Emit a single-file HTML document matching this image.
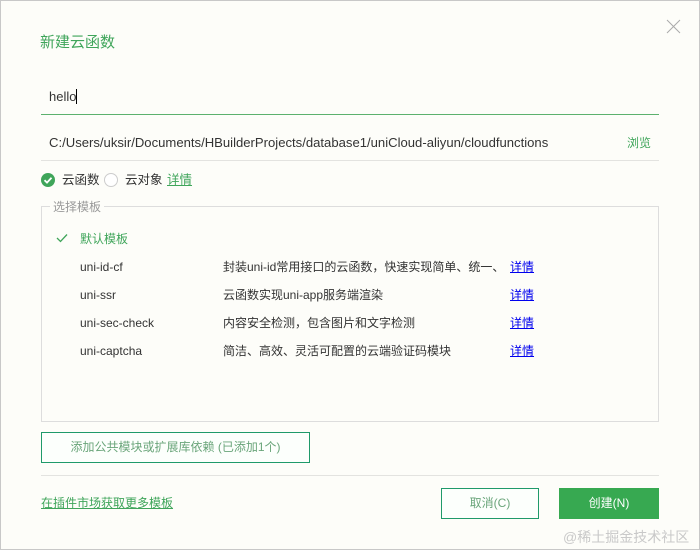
<!DOCTYPE html>
<html><head><meta charset="utf-8"><style>
*{margin:0;padding:0;box-sizing:border-box}
body{width:700px;height:550px;background:#fdfdf9;font-family:"Liberation Sans","Noto Sans CJK SC",sans-serif;font-size:12px;color:#333;position:relative;overflow:hidden}
.frame{position:absolute;left:0;top:0;width:700px;height:550px;border:1px solid #c8c8c8}
.a{position:absolute;white-space:nowrap;line-height:16px}
.g{color:#3fa55a}
.lnk{color:#00e;text-decoration:underline}
.hr{position:absolute;height:1px;background:#e3e3e0}
</style></head><body>
<div class="frame"></div>
<div class="a g" style="left:40px;top:34px;font-size:15px;line-height:18px">新建云函数</div>
<svg class="a" style="left:666px;top:19px" width="15" height="15"><path d="M1 1L14 14M14 1L1 14" stroke="#aaa" stroke-width="1"/></svg>
<div class="a" style="left:49px;top:89px;font-size:13px">hello<span style="display:inline-block;width:1px;height:15px;background:#000;vertical-align:-3px"></span></div>
<div style="position:absolute;left:41px;top:114px;width:618px;height:1px;background:#5cb16e"></div>
<div class="a" style="left:49px;top:135px;font-size:13.1px">C:/Users/uksir/Documents/HBuilderProjects/database1/uniCloud-aliyun/cloudfunctions</div>
<div class="a g" style="left:627px;top:135px">浏览</div>
<div class="hr" style="left:41px;top:160px;width:618px"></div>
<svg class="a" style="left:41px;top:173px" width="14" height="14"><circle cx="7" cy="7" r="7" fill="#3fa55a"/><path d="M3.5 7.2L6 9.6L10.5 4.8" stroke="#fff" stroke-width="1.8" fill="none"/></svg>
<div class="a" style="left:62px;top:172px;font-size:12.5px">云函数</div>
<svg class="a" style="left:104px;top:173px" width="14" height="14"><circle cx="7" cy="7" r="6.5" fill="#fff" stroke="#ccc"/></svg>
<div class="a" style="left:125px;top:172px;font-size:12.5px">云对象</div>
<div class="a g" style="left:167px;top:172px;text-decoration:underline;font-size:12.5px">详情</div>
<div style="position:absolute;left:41px;top:206px;width:618px;height:216px;border:1px solid #ddd"></div>
<div class="a" style="left:50px;top:199px;background:#fdfdf9;padding:0 3px;color:#999">选择模板</div>
<svg class="a" style="left:56px;top:233px" width="12" height="10"><path d="M1 5L4.5 8.5L11 1.5" stroke="#3fa55a" stroke-width="1.3" fill="none"/></svg>
<div class="a g" style="left:80px;top:231px">默认模板</div>
<div class="a" style="left:80px;top:259px">uni-id-cf</div><div class="a" style="left:223px;top:259px">封装uni-id常用接口的云函数，快速实现简单、统一、</div><div class="a lnk" style="left:510px;top:259px">详情</div>
<div class="a" style="left:80px;top:287px">uni-ssr</div><div class="a" style="left:223px;top:287px">云函数实现uni-app服务端渲染</div><div class="a lnk" style="left:510px;top:287px">详情</div>
<div class="a" style="left:80px;top:315px">uni-sec-check</div><div class="a" style="left:223px;top:315px">内容安全检测，包含图片和文字检测</div><div class="a lnk" style="left:510px;top:315px">详情</div>
<div class="a" style="left:80px;top:343px">uni-captcha</div><div class="a" style="left:223px;top:343px">简洁、高效、灵活可配置的云端验证码模块</div><div class="a lnk" style="left:510px;top:343px">详情</div>
<div style="position:absolute;left:41px;top:432px;width:269px;height:31px;border:1px solid #1f9a6a;background:#fcfffc;color:#6aa57a;text-align:center;line-height:29px">添加公共模块或扩展库依赖 (已添加1个)</div>
<div class="hr" style="left:41px;top:475px;width:618px"></div>
<div class="a g" style="left:41px;top:495px;text-decoration:underline">在插件市场获取更多模板</div>
<div style="position:absolute;left:441px;top:488px;width:98px;height:31px;border:1px solid #1f9a6a;background:#fcfffc;color:#6aa57a;text-align:center;line-height:29px">取消(C)</div>
<div style="position:absolute;left:559px;top:488px;width:100px;height:31px;background:#37a951;color:#fff;text-align:center;line-height:31px">创建(N)</div>
<div class="a" style="left:563px;top:528px;color:#c9c9c9;font-size:14px;line-height:18px">@稀土掘金技术社区</div>
</body></html>
